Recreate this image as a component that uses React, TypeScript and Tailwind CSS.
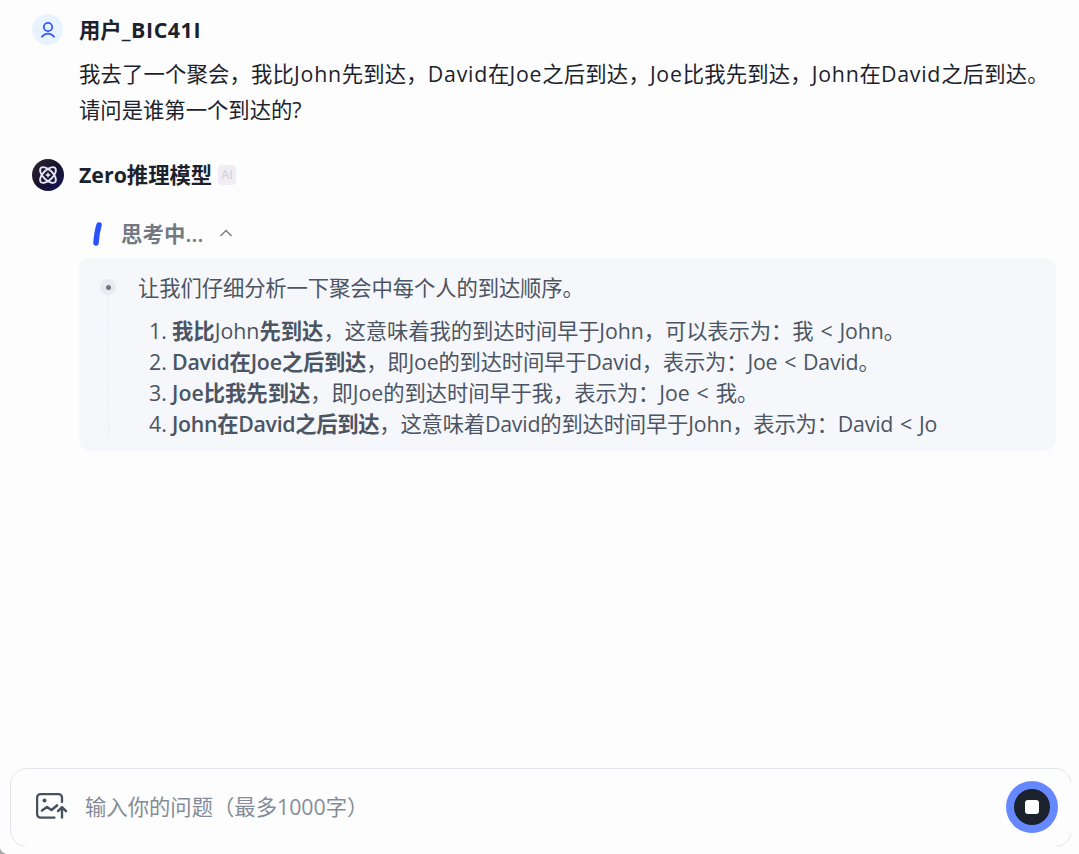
import type { ReactNode } from 'react'

const FONT = "font-['Open_Sans','Noto_Sans_CJK_SC',sans-serif]"

interface Step {
  title: ReactNode
  detail: string
  titleClass: string
  detailClass: string
}

const steps: Step[] = [
  {
    title: <>我比<span className="font-medium">John</span>先到达</>,
    detail: '，这意味着我的到达时间早于John，可以表示为：我 < John。',
    titleClass: '',
    detailClass: 'tracking-[-0.1px] [word-spacing:1.5px]',
  },
  {
    title: 'David在Joe之后到达',
    detail: '，即Joe的到达时间早于David，表示为：Joe < David。',
    titleClass: 'tracking-[-0.21px]',
    detailClass: 'tracking-[-0.2px] [word-spacing:1.5px]',
  },
  {
    title: 'Joe比我先到达',
    detail: '，即Joe的到达时间早于我，表示为：Joe < 我。',
    titleClass: '',
    detailClass: 'tracking-[-0.08px] [word-spacing:1.5px]',
  },
  {
    title: 'John在David之后到达',
    detail: '，这意味着David的到达时间早于John，表示为：David < Jo',
    titleClass: 'tracking-[-0.32px]',
    detailClass: 'tracking-[-0.2px] [word-spacing:1.5px]',
  },
]

function Name({ children }: { children: string }) {
  return <span className="tracking-[0.75px]">{children}</span>
}

function UserAvatar() {
  return (
    <div className="flex size-[31px] shrink-0 items-center justify-center rounded-full bg-[#e8f3ff]">
      <svg width="16" height="18" viewBox="0 0 16 18" fill="none" stroke="#3457ff" strokeWidth="1.8">
        <circle cx="8" cy="6" r="4.2" />
        <path d="M1.5 16.2C3.2 14 5.500 12.600 8 12.600s4.800 1.400 6.500 3.600" />
      </svg>
    </div>
  )
}

function ModelAvatar() {
  return (
    <div className="flex size-8 shrink-0 items-center justify-center rounded-full bg-linear-to-br from-[#35282c] via-[#15112d] to-[#17165e]">
      <svg width="20" height="20" viewBox="0 0 20 20" fill="none" stroke="#e6e4f2" strokeWidth="1.9">
        <ellipse cx="10" cy="10" rx="10" ry="4.9" transform="rotate(45 10 10)" />
        <ellipse cx="10" cy="10" rx="10" ry="4.9" transform="rotate(-45 10 10)" />
        <path d="M10 7l1 2 2 1-2 1-1 2-1-2-2-1 2-1z" fill="#e6e4f2" stroke="none" />
      </svg>
    </div>
  )
}

function UploadIcon() {
  return (
    <svg width="32" height="27" viewBox="0 0 32 27" fill="none" stroke="#465160" strokeWidth="2.3" strokeLinecap="round" strokeLinejoin="round">
      <path d="M26 9V4.600a3.500 3.500 0 0 0-3.500-3.500H4.600a3.500 3.500 0 0 0-3.500 3.500v16.500a3.500 3.500 0 0 0 3.500 3.500H18.500" />
      <path d="M6 17.500l5-3.500 4.500 3 5.500-4.500" strokeWidth="2.6" />
      <path d="M26 24.500V14.500M22 18.200l4-4 4 4" strokeWidth="2.4" />
      <circle cx="8.500" cy="7.500" r="2" fill="#465160" stroke="none" />
    </svg>
  )
}

function ThinkingPanel() {
  return (
    <section className="flex h-[193px] w-[977px] rounded-xl bg-[#f6f7fb] text-[#4b5563]">
      <div className="ml-[21px] flex w-4 flex-col items-center pt-[21px]">
        <span className="flex size-4 items-center justify-center rounded-full bg-[#e9eaef]">
          <span className="size-[5px] rounded-full bg-[#6f7580]" />
        </span>
        <span className="h-[142px] border-l border-dashed border-[#e8eaf2]" />
      </div>
      <div className="ml-[22px] whitespace-nowrap pt-[15px]">
        <p className="h-[42px] leading-[30px] tracking-[-0.1px]">让我们仔细分析一下聚会中每个人的到达顺序。</p>
        <ol>
          {steps.map((step, i) => (
            <li key={i} className="flex h-[31px] leading-[31px]">
              <span className="w-[34px] pl-[11px]">{i + 1}.</span>
              <span>
                <strong className={`font-semibold ${step.titleClass}`}>{step.title}</strong>
                <span className={step.detailClass}>{step.detail}</span>
              </span>
            </li>
          ))}
        </ol>
      </div>
    </section>
  )
}

export default function App() {
  return (
    <main lang="zh-CN" className={`relative flex h-[854px] w-[1079px] flex-col overflow-hidden bg-[#fdfdfd] text-[21.33px] text-[#1c222c] ${FONT}`}>
      <article className="flex gap-4 pl-8 pt-3.5">
        <UserAvatar />
        <div className="whitespace-nowrap">
          <h2 className="h-[42px] font-semibold leading-8">
            用户<span className="font-bold tracking-[0.6px]">_BIC41I</span>
          </h2>
          <p className="leading-9">
            <span className="tracking-[0.18px]">
              我去了一个聚会，我比<Name>John</Name>先到达，<Name>David</Name>在<Name>Joe</Name>之后到达，<Name>Joe</Name>比我先到达，<Name>John</Name>在<Name>David</Name>之后到达。
            </span>
            <br />
            请问是谁第一个到达的?
          </p>
        </div>
      </article>

      <article className="mt-[31px] pl-8">
        <header className="flex items-center">
          <ModelAvatar />
          <h2 className="ml-[15px] font-semibold leading-8"><span className="font-bold">Zero</span>推理模型</h2>
          <span className="ml-1.5 flex h-5 w-[18px] items-center justify-center rounded bg-[#f1edf3] text-[12px] font-semibold text-[#d5d5df]">AI</span>
        </header>
        <div className="mt-[27px] flex h-8 items-center pl-[59px] text-[#737982]">
          <svg width="12" height="26" viewBox="0 0 12 26" fill="none" stroke="#2953ff" strokeWidth="5.5" strokeLinecap="round">
            <path d="M8 4C6.500 9 5.500 15 5 22" />
          </svg>
          <span className="ml-[18px] font-semibold tracking-[0.15px]">思考中...</span>
          <svg className="mb-0.5 ml-4" width="14" height="8" viewBox="0 0 14 8" fill="none" stroke="#7b818a" strokeWidth="1.5">
            <path d="M1.500 7L7 1.500 12.500 7" />
          </svg>
        </div>
        <div className="mt-2 pl-[47px]">
          <ThinkingPanel />
        </div>
      </article>

      <footer className="relative mb-[7px] ml-2.5 mt-auto flex h-[79px] w-[1062px] items-center rounded-[17px] border border-[#e3e5ea] pb-px pl-[25px] pr-[13px]">
        <span className="absolute -bottom-px left-3.5 right-3.5 h-px bg-[#fdfdfd]" />
        <span className="absolute -right-px bottom-3 top-3 w-px bg-[#fdfdfd]" />
        <div className="-mt-0.5">
          <UploadIcon />
        </div>
        <span className="ml-[17px] text-[#858c99]">输入你的问题（最多1000字）</span>
        <button className="ml-auto flex size-[52px] items-center justify-center rounded-full bg-[#6688ff]">
          <span className="flex size-9 items-center justify-center rounded-full bg-[#1b212d]">
            <span className="size-3.5 rounded-[3px] bg-white" />
          </span>
        </button>
      </footer>

      <svg className="absolute bottom-0 left-0" width="7" height="6" viewBox="0 0 7 6">
        <path d="M0 0Q1 5 7 6H0z" fill="#a6a5aa" />
      </svg>
    </main>
  )
}
